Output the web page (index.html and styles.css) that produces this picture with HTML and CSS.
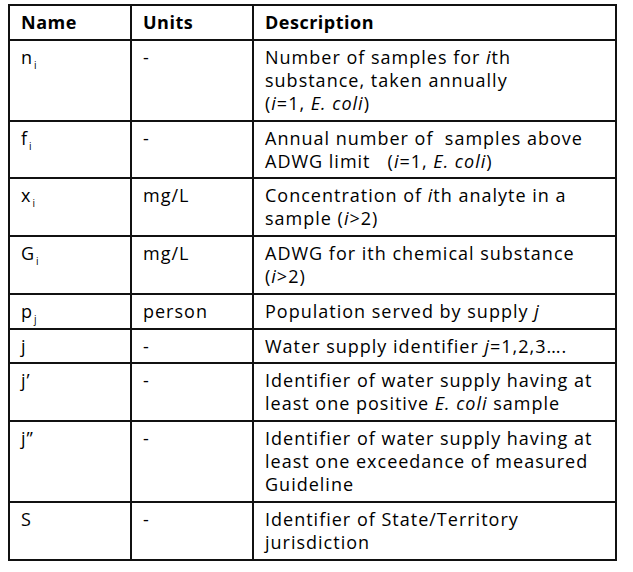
FILE: index.html
```html
<!DOCTYPE html>
<html>
<head>
<meta charset="utf-8">
<link rel="stylesheet" href="styles.css">
</head>
<body>
<table class="vars">
  <thead>
    <tr><th class="c-name">Name</th><th class="c-units">Units</th><th class="c-desc">Description</th></tr>
  </thead>
  <tbody>
    <tr><td>n<sub>i</sub></td><td>-</td><td>Number of samples for <i>i</i>th<br>substance, taken annually<br>(<i>i</i>=1, <i>E. coli</i>)</td></tr>
    <tr class="short"><td>f<sub>i</sub></td><td>-</td><td>Annual number of &nbsp;samples above<br>ADWG limit &nbsp;&nbsp;(<i>i</i>=1, <i>E. coli</i>)</td></tr>
    <tr><td>x<sub>i</sub></td><td>mg/L</td><td>Concentration of <i>i</i>th analyte in a<br>sample (<i>i</i>&gt;2)</td></tr>
    <tr><td>G<sub>i</sub></td><td>mg/L</td><td>ADWG for ith chemical substance<br>(<i>i</i>&gt;2)</td></tr>
    <tr><td>p<sub>j</sub></td><td>person</td><td>Population served by supply <i>j</i></td></tr>
    <tr class="short"><td>j</td><td>-</td><td>Water supply identifier <i>j</i>=1,2,3….</td></tr>
    <tr><td>j’</td><td>-</td><td>Identifier of water supply having at<br>least one positive <i>E. coli</i> sample</td></tr>
    <tr><td>j”</td><td>-</td><td>Identifier of water supply having at<br>least one exceedance of measured<br>Guideline</td></tr>
    <tr><td>S</td><td>-</td><td>Identifier of State/Territory<br>jurisdiction</td></tr>
  </tbody>
</table>
</body>
</html>
```
FILE: styles.css
```css
html, body {
  margin: 0;
  padding: 0;
  background: #ffffff;
}
body {
  padding: 4px 0 0 8px;
  font-family: "Open Sans", "Liberation Sans", sans-serif;
  color: #000;
}
.vars {
  border-collapse: collapse;
  width: 609px;
  table-layout: fixed;
  font-size: 18px;
  line-height: 23px;
  letter-spacing: 1px;
}
.vars th, .vars td {
  border: 2px solid #111;
  padding: 5px 10px 5px 11px;
  text-align: left;
  vertical-align: top;
  white-space: nowrap;
}
.vars th {
  font-weight: 700;
  letter-spacing: 0.5px;
}
.c-name { width: 99px; }
.c-units { width: 99px; }
.vars sub {
  font-size: 10px;
  line-height: 0;
  vertical-align: -5px;
  margin-left: 1px;
  letter-spacing: 0;
}
.vars tr.short td {
  padding-bottom: 4px;
}
```
